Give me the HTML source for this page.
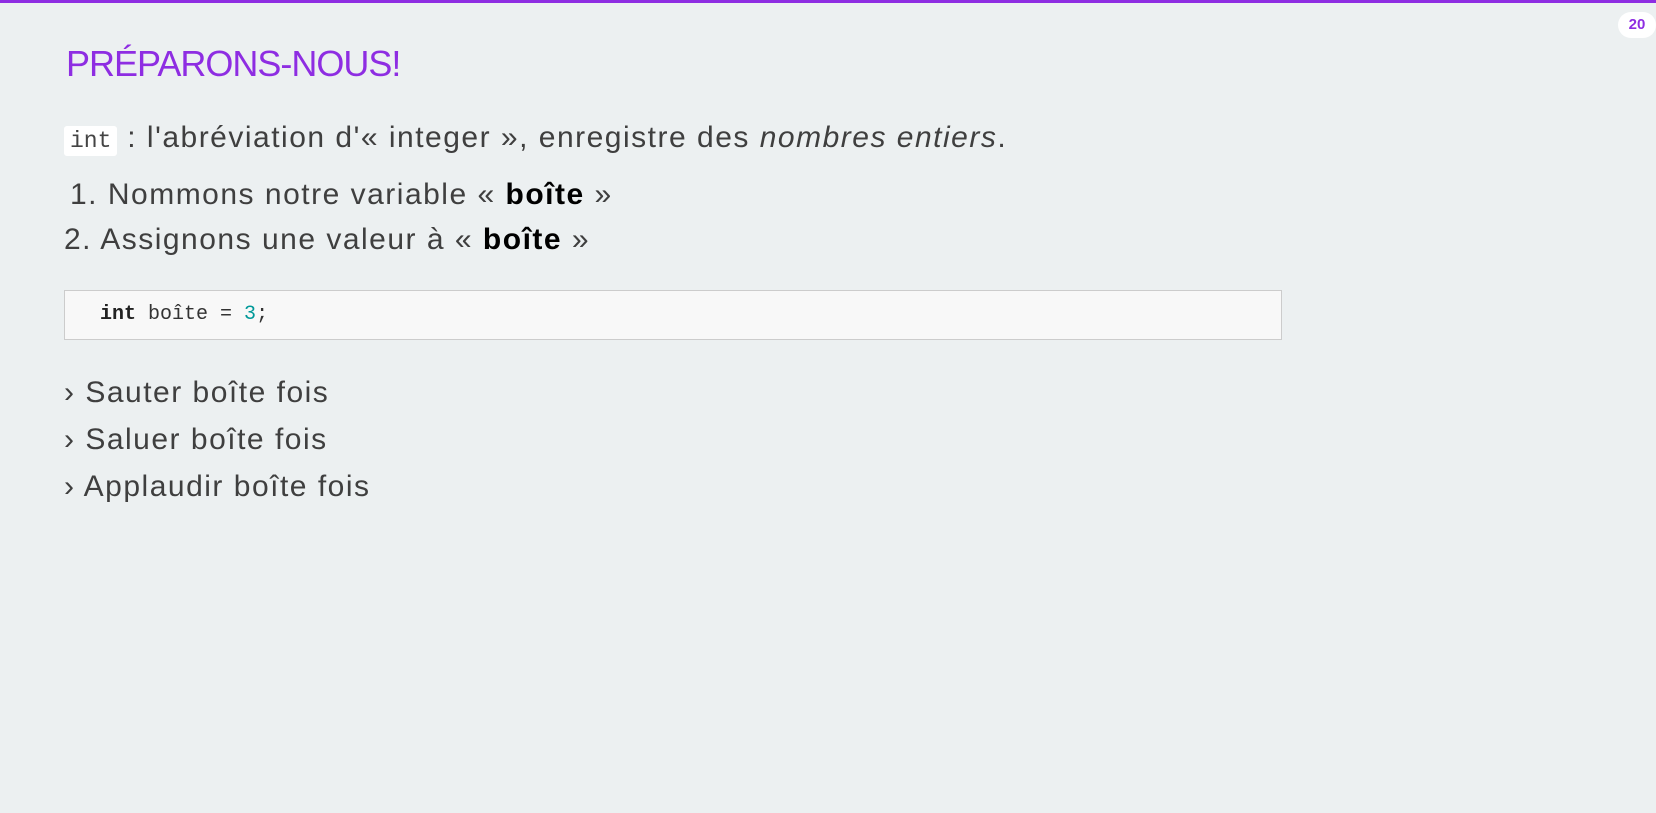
<!DOCTYPE html>
<html><head><meta charset="utf-8"><style>
html,body{margin:0;padding:0}
body{width:1656px;height:813px;background:#ecf0f1;position:relative;overflow:hidden;font-family:"Liberation Sans",sans-serif;color:#3f3f3f}
.bar{position:absolute;left:0;top:0;width:1656px;height:3px;background:#8e2de2}
.badge{position:absolute;left:1618px;top:12px;width:38px;height:26px;border-radius:13px;background:#fff;color:#8e2de2;font-weight:bold;font-size:15px;line-height:26px;text-align:center}
h1{position:absolute;left:66px;top:43px;margin:0;font-weight:normal;font-size:36px;color:#8e2de2;letter-spacing:-1px}
.p{position:absolute;left:64px;font-size:30px;line-height:34px;letter-spacing:1.5px;white-space:nowrap}
code.i{font-family:"Liberation Mono",monospace;background:#fff;border-radius:3px;padding:2px 6px;font-size:23px;color:#444;letter-spacing:0}
b{color:#000}
.pre{position:absolute;left:64px;top:290px;width:1218px;height:50px;background:#f8f8f8;border:1px solid #ccc;box-sizing:border-box;font-family:"Liberation Mono",monospace;font-size:20px;line-height:48px;padding-left:35px;color:#333}
</style></head><body>
<div class="bar"></div>
<div class="badge">20</div>
<h1>PRÉPARONS-NOUS!</h1>
<div class="p" style="top:121px"><code class="i">int</code> : l'abréviation d'« integer », enregistre des <i>nombres entiers</i>.</div>
<div class="p" style="top:178px;left:70px">1. Nommons notre variable « <b>boîte</b> »</div>
<div class="p" style="top:223px">2. Assignons une valeur à « <b>boîte</b> »</div>
<div class="pre"><b style="color:#222">int</b> boîte = <span style="color:#099">3</span>;</div>
<div class="p" style="top:376px">› Sauter boîte fois</div>
<div class="p" style="top:423px">› Saluer boîte fois</div>
<div class="p" style="top:470px">› Applaudir boîte fois</div>
</body></html>
